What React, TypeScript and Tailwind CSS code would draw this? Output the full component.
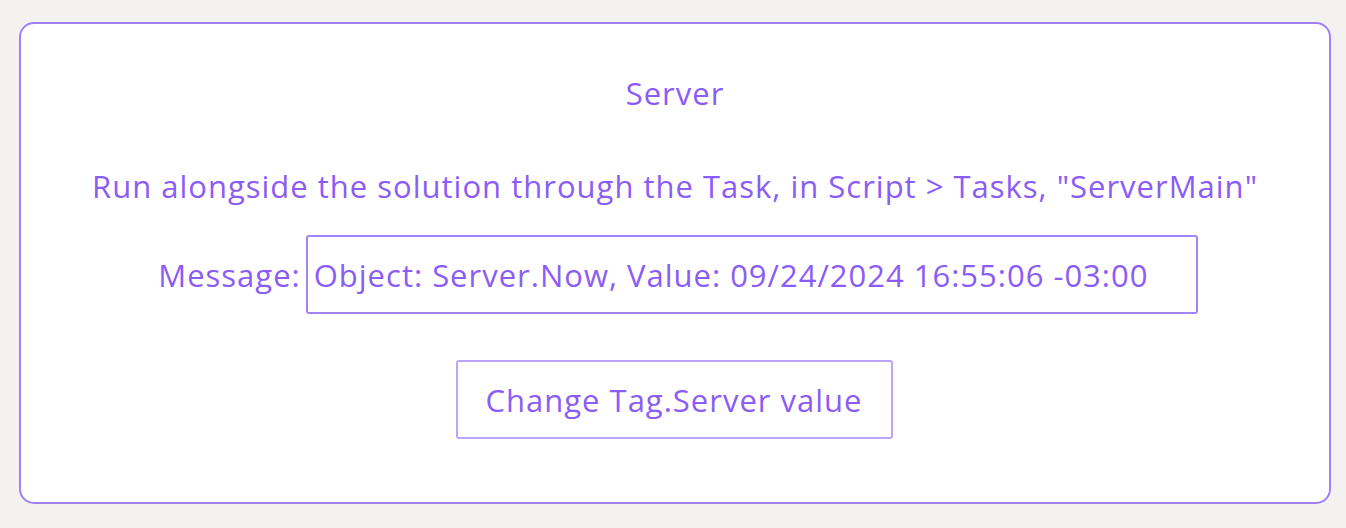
export default function App() {
  return (
    <div className="min-h-screen w-full bg-[#f4f2f0] pl-[19px] pr-[15px] pt-[22px] font-['Open_Sans',sans-serif] text-[#8b5cf6]">
      <div className="flex h-[482px] flex-col items-center rounded-[15px] border-2 border-[#9f80f8] bg-white text-[31px] leading-[40px] tracking-[1px]">
        <div className="mt-[49px]">Server</div>
        <div className="mt-[53px]">
          Run alongside the solution through the Task, in Script &gt; Tasks, "ServerMain"
        </div>
        <div className="mt-[29px] ml-[6px] flex items-center">
          <span>Message:</span>
          <div className="ml-[5px] flex h-[79px] w-[892px] items-center rounded-[3px] border-2 border-[#a084f8] px-[6px]">
            Object: Server.Now, Value: 09/24/2024 16:55:06 -03:00
          </div>
        </div>
        <button className="mt-[46px] mr-[2px] h-[79px] w-[437px] rounded-[3px] border-2 border-[#bba4fb] tracking-[1px] text-[#8b5cf6]">
          Change Tag.Server value
        </button>
      </div>
    </div>
  );
}
